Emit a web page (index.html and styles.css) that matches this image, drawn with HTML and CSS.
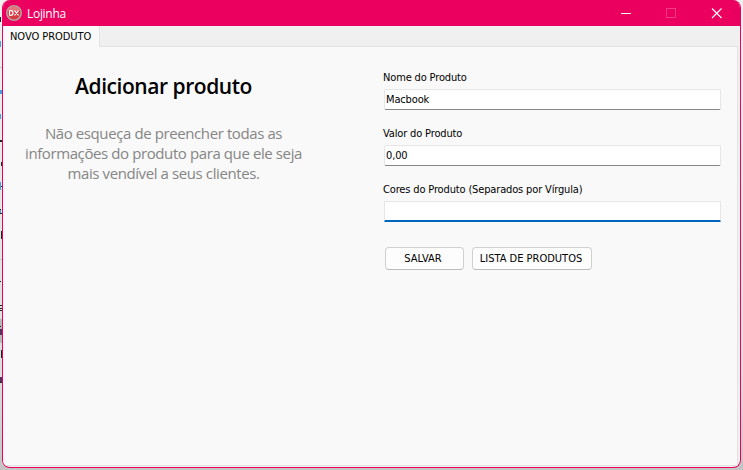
FILE: index.html
```
<!DOCTYPE html>
<html lang="pt-BR">
<head>
<meta charset="utf-8">
<title>Lojinha</title>
<link rel="stylesheet" href="styles.css">
</head>
<body>
<svg class="behind" width="8" height="470" viewBox="0 0 8 470" shape-rendering="crispEdges">
  <path fill="#c8c8c8" d="M0 67h2v1H0zM0 259h2v1H0z"/>
  <path fill="#b8b8b8" d="M0 319h2v24H0z"/>
  <path fill="#222" d="M0 17h1v5H0zM0 140h2v2H0zM1 162h1v4H1zM0 186h2v1H0zM0 209h1v1H0zM0 213h2v1H0zM1 231h1v8H1zM0 281h1v1H0zM0 305h2v1H0zM0 308h2v1H0zM0 310h2v1H0zM0 326h1v1H0zM1 350h1v8H1zM0 382h2v1H0z"/>
  <path fill="#4a9fe0" d="M0 41h1v6H0zM0 90h2v4H0zM0 114h1v5H0zM0 182h1v8H0zM0 210h1v3H0z"/>
  <path fill="#553060" d="M0 329h2v6H0zM0 377h2v5H0z"/>
</svg>
<main class="window">
  <header class="titlebar">
    <svg class="logo" width="16" height="16" viewBox="0 0 16 16">
      <circle cx="8" cy="8" r="7.2" fill="#d53c44" stroke="#b9a09f" stroke-width="1.6"/>
      <path d="M2.2 6a6 6 0 0 1 11.6 0z" fill="#e4777c"/>
      <path d="M3.5 5.7v4.6M3.5 5.7h1.3q2.2 0 2.2 2.3t-2.2 2.3H3.5M8.500 5.700l4 4.600M12.500 5.700l-4 4.600" fill="none" stroke="#fff" stroke-width="1.2"/>
    </svg>
    <h1 class="caption">Lojinha</h1>
    <svg class="controls" width="110" height="16" viewBox="0 0 110 16" fill="none" shape-rendering="crispEdges">
      <path d="M4 8.5h10" stroke="#fff"/>
      <rect x="49.5" y="3.5" width="9" height="9" stroke="#f13a82"/>
      <path d="M95 3.5l9.5 9.5M104.500 3.500l-9.500 9.500" stroke="#fff" stroke-width="1.1" shape-rendering="auto"/>
    </svg>
  </header>
  <nav class="tabs"><span class="tab">NOVO PRODUTO</span></nav>
  <section class="page">
    <div class="intro">
      <h2>Adicionar produto</h2>
      <p><span>Não esqueça de preencher todas as</span><span>informações do produto para que ele seja</span><span>mais vendível a seus clientes.</span></p>
    </div>
    <form class="form">
      <label class="field"><span class="name">Nome do Produto</span><span class="box">Macbook</span></label>
      <label class="field"><span class="name">Valor do Produto</span><span class="box">0,00</span></label>
      <label class="field"><span class="name">Cores do Produto (Separados por Vírgula)</span><span class="box focused"></span></label>
      <div class="actions">
        <button type="button" class="save">SALVAR</button>
        <button type="button" class="list">LISTA DE PRODUTOS</button>
      </div>
    </form>
  </section>
</main>
</body>
</html>
```
FILE: styles.css
```
* { box-sizing: border-box; }
body {
  margin: 0;
  height: 470px;
  overflow: hidden;
  padding: 0 2px 2px;
  background: linear-gradient(#f0f0f0, #dedede 80%, #c4c4c4);
  font: 11px/14px "DejaVu Sans Condensed", "DejaVu Sans", sans-serif;
  font-stretch: condensed;
  color: #000;
  white-space: nowrap;
}
.behind { position: absolute; left: 0; top: 0; }
.window {
  position: relative;
  width: 739px;
  height: 468px;
  display: flex;
  flex-direction: column;
  border: 1px solid #ec005f;
  border-top: 0;
  border-radius: 8px;
  overflow: hidden;
  background: #f0f0f0;
}
.titlebar {
  height: 26px;
  display: flex;
  align-items: center;
  padding-left: 3px;
  background: #ec005f;
}
.caption {
  margin: 1px 0 0 5px;
  font: 12px/16px "Open Sans", "Noto Sans", sans-serif;
  letter-spacing: -0.3px;
  color: #fff;
}
.controls { margin-left: auto; margin-right: 13px; }
.tabs { height: 20px; display: flex; }
.tab {
  width: 97px;
  height: 21px;
  padding: 4px 0 0 7px;
  background: #f9f9f9;
  border-right: 1px solid #e2e2e2;
  letter-spacing: -0.05px;
  z-index: 1;
}
.page {
  flex: 1;
  display: flex;
  margin: 0 2px 1px 0;
  border: 1px solid #e3e3e3;
  border-left: 0;
  background: #f9f9f9;
}
.intro { width: 321px; margin-right: 60px; text-align: center; }
h2 {
  margin: 25px 0 0;
  font: 600 21px/28px "Open Sans", "Noto Sans", sans-serif;
  letter-spacing: -0.45px;
}
p {
  margin: 23px 0 0;
  font: 15px/20px "Open Sans", "Noto Sans", sans-serif;
  letter-spacing: -0.4px;
  color: #858585;
}
p span { display: block; }
.form { width: 337px; padding-top: 22px; }
.field { display: block; height: 56px; letter-spacing: -0.15px; }
.name { display: block; height: 20px; padding-top: 2px; margin-left: -1px; }
.box {
  display: block;
  height: 21px;
  padding: 3px 1px 0;
  background: #fff;
  border: 1px solid #e6e6e6;
  border-bottom-color: #868686;
  border-radius: 2px;
}
.box.focused { border-bottom: 2px solid #0067c0; border-radius: 1px; }
.actions { display: flex; gap: 8px; padding: 10px 0 0 1px; }
button {
  height: 23px;
  padding: 1px 0 0;
  border: 1px solid #d0d0d0;
  border-bottom-color: #bbb;
  border-radius: 4px;
  background: #fdfdfd;
  font: inherit;
  color: #000;
}
.save { width: 79px; padding-right: 3px; }
.list { width: 120px; padding-right: 2px; }
```
